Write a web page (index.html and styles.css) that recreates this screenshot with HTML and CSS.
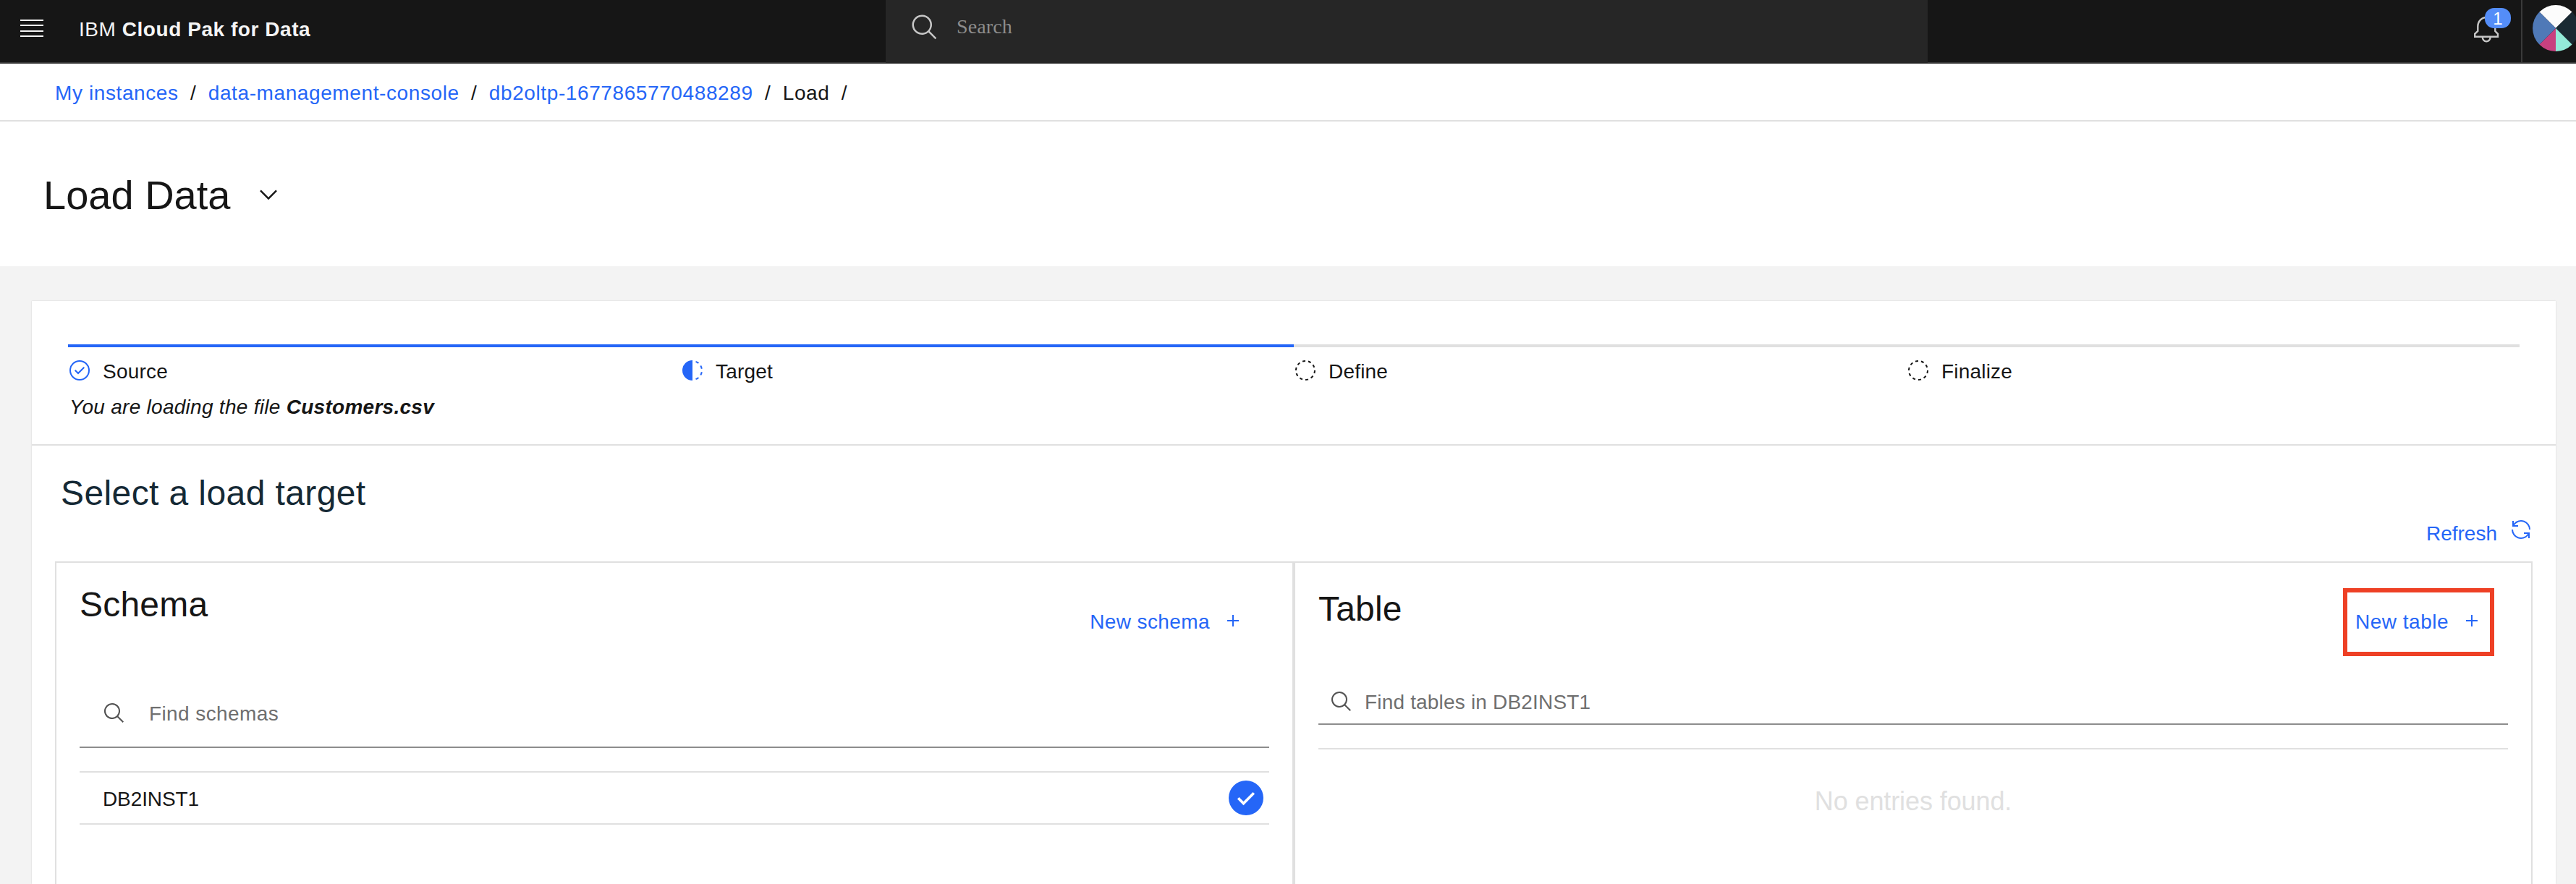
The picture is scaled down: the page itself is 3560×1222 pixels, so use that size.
FILE: index.html
```html
<!DOCTYPE html>
<html lang="en">
<head>
<meta charset="utf-8">
<title>Load Data</title>
<link rel="stylesheet" href="styles.css">
</head>
<body>
<svg class="sprite" aria-hidden="true">
  <symbol id="search" viewBox="0 0 32 32"><path d="M29 27.586l-7.552-7.552a11.018 11.018 0 1 0-1.414 1.414L27.586 29ZM4 13a9 9 0 1 1 9 9a9.01 9.01 0 0 1-9-9Z"/></symbol>
  <symbol id="add" viewBox="0 0 32 32"><path d="M17 15V8h-2v7H8v2h7v7h2v-7h7v-2z"/></symbol>
  <symbol id="circle-dash" viewBox="0 0 32 32"><path d="M7.7 4.7a14.7 14.7 0 00-3 3.1L6.3 9A13.26 13.26 0 018.9 6.3zM4.6 12.3l-1.9-.6A12.51 12.51 0 002 16H4A11.48 11.48 0 014.6 12.3zM2.7 20.4a14.4 14.4 0 002 3.9l1.6-1.2a12.89 12.89 0 01-1.7-3.3zM7.8 27.3a14.4 14.4 0 003.9 2l.6-1.9A12.89 12.89 0 019 25.7zM11.7 2.7l.6 1.9A11.48 11.48 0 0116 4V2A12.51 12.51 0 0011.7 2.7zM24.2 27.3a15.18 15.18 0 003.1-3.1L25.7 23A11.53 11.53 0 0123 25.7zM27.4 19.7l1.9.6A15.47 15.47 0 0030 16H28A11.48 11.48 0 0127.4 19.7zM29.2 11.6a14.4 14.4 0 00-2-3.9L25.6 8.9a12.89 12.89 0 011.7 3.3zM24.1 4.6a14.4 14.4 0 00-3.9-2l-.6 1.9a12.89 12.89 0 013.3 1.7zM20.3 29.3l-.6-1.9A11.48 11.48 0 0116 28v2A21.42 21.42 0 0020.3 29.3z"/></symbol>
</svg>

<header class="topbar">
  <div class="menu"><span></span><span></span><span></span><span></span></div>
  <div class="brand">IBM <b>Cloud Pak for Data</b></div>
  <div class="global-search">
    <svg class="global-search-icon"><use href="#search"/></svg>
    <span>Search</span>
  </div>
  <div class="notifications">
    <svg class="bell" viewBox="0 0 40 40"><path d="M4.2 30.8V26.8L8.3 23V16.5a12 12.5 0 0 1 24 0V23l3.7 3.8v4ZM14.8 31v.8a5.4 5.4 0 0 0 10.8 0V31"/></svg>
    <span class="badge">1</span>
  </div>
  <div class="profile">
    <svg class="avatar" viewBox="-32 -32 64 64">
      <path fill="#fcfcfc" d="M0 0L-22.6-22.6A32 32 0 0 1 22.6-22.6Z"/>
      <path fill="#1a2a33" d="M0 0L22.6-22.6A32 32 0 0 1 22.6 22.6Z"/>
      <path fill="#93ebd9" d="M0 0L22.6 22.6A32 32 0 0 1 0 32Z"/>
      <path fill="#c8407f" d="M0 0V32A32 32 0 0 1-22.6 22.6Z"/>
      <path fill="#4f79b7" d="M0 0L-22.6 22.6A32 32 0 0 1-22.6-22.6Z"/>
    </svg>
  </div>
</header>

<nav class="breadcrumb">
  <a>My instances</a><i>/</i><a>data-management-console</a><i>/</i><a>db2oltp-1677865770488289</a><i>/</i><span>Load</span><i>/</i>
</nav>

<div class="page-title">
  <h1>Load Data</h1>
  <svg class="chevron" viewBox="0 0 32 32"><path d="M16 22L6 12l1.4-1.4 8.6 8.6 8.6-8.6L26 12z"/></svg>
</div>

<main class="workspace">
  <section class="card">
    <div class="progress">
      <ol class="steps">
        <li class="step done">
          <svg class="icon" viewBox="0 0 32 32"><path d="M14 21.414L9 16.413 10.413 15 14 18.586 21.585 11 23 12.415z"/><path d="M16 2a14 14 0 1 0 14 14A14 14 0 0 0 16 2Zm0 26a12 12 0 1 1 12-12A12 12 0 0 1 16 28Z"/></svg>
          <span>Source</span>
        </li>
        <li class="step done">
          <svg class="icon" viewBox="0 0 32 32"><path d="M23.764 6.859l1.285-1.531A13.976 13.976 0 0020.867 2.887l-.683 1.878A11.973 11.973 0 0123.764 6.859zM27.81 14l1.968-.413A13.889 13.889 0 0028.14 9.046L26.409 10A12.52 12.52 0 0127.81 14zM20.184 27.235l.683 1.878a13.976 13.976 0 004.182-2.441l-1.285-1.531A11.973 11.973 0 0120.184 27.235zM26.409 22L28.14 23a14.14 14.14 0 001.638-4.587L27.81 18.066A12.152 12.152 0 0126.409 22zM16 30V2a14 14 0 000 28z"/></svg>
          <span>Target</span>
        </li>
        <li class="step">
          <svg class="icon"><use href="#circle-dash"/></svg>
          <span>Define</span>
        </li>
        <li class="step">
          <svg class="icon"><use href="#circle-dash"/></svg>
          <span>Finalize</span>
        </li>
      </ol>
      <p class="file-note">You are loading the file <b>Customers.csv</b></p>
    </div>

    <h2 class="section-title">Select a load target</h2>
    <div class="refresh">
      <span>Refresh</span>
      <svg class="icon" viewBox="0 0 32 32"><path d="M12 10H6.78A11 11 0 0 1 27 16h2A13 13 0 0 0 6 7.68V4H4v8h8ZM20 22h5.22A11 11 0 0 1 5 16H3a13 13 0 0 0 23 8.32V28h2V20H20Z"/></svg>
    </div>

    <div class="panels">
      <section class="panel">
        <div class="panel-head">
          <h3>Schema</h3>
          <div class="action new-schema"><span>New schema</span><svg class="icon"><use href="#add"/></svg></div>
        </div>
        <div class="field field-tall">
          <svg class="icon"><use href="#search"/></svg>
          <span>Find schemas</span>
        </div>
        <div class="list">
          <div class="row">
            <span>DB2INST1</span>
            <svg class="selected" viewBox="0 0 48 48"><circle cx="24" cy="24" r="24"/><path d="M13.2 24.3l7.3 7.3L34.8 17.3"/></svg>
          </div>
        </div>
      </section>
      <section class="panel panel-table">
        <div class="panel-head">
          <h3>Table</h3>
          <div class="action new-table"><span>New table</span><svg class="icon"><use href="#add"/></svg></div>
        </div>
        <div class="field">
          <svg class="icon"><use href="#search"/></svg>
          <span>Find tables in DB2INST1</span>
        </div>
        <div class="list">
          <p class="empty">No entries found.</p>
        </div>
      </section>
    </div>
  </section>
</main>
</body>
</html>
```

FILE: styles.css
```css
* { box-sizing: border-box; }
html, body { height: 100%; }
body {
  margin: 0;
  display: flex;
  flex-direction: column;
  overflow: hidden;
  background: #fff;
  color: #161616;
  font: 28px/35px "Liberation Sans", Arial, sans-serif;
  letter-spacing: 0.4px;
  white-space: nowrap;
}
h1, h2, h3, p, ol { margin: 0; padding: 0; font-weight: 400; }
svg { display: block; flex: none; fill: currentColor; }
.sprite { display: none; }
.icon { width: 32px; height: 32px; }

/* Top bar */
.topbar {
  flex: none;
  display: flex;
  height: 88px;
  background: #161616;
  color: #f4f4f4;
  border-bottom: 2px solid #393939;
}
.menu {
  width: 60px;
  height: 51px;
  padding: 27px 0 0 28px;
  display: flex;
  flex-direction: column;
  justify-content: space-between;
}
.menu span { height: 2px; background: #f4f4f4; }
.brand { width: 1164px; padding-left: 49px; line-height: 81px; letter-spacing: 0.55px; }
.global-search {
  width: 1440px;
  height: 87px;
  display: flex;
  padding-left: 34px;
  background: #262626;
  color: #8d8d8d;
  font-family: "Liberation Serif", "Times New Roman", serif;
  letter-spacing: 0.1px;
}
.global-search-icon { width: 40px; height: 40px; margin: 18px 24px 0 0; color: #c6c6c6; }
.global-search span { line-height: 74px; }
.notifications {
  position: relative;
  width: 820px;
  display: flex;
  justify-content: flex-end;
  padding: 20px 28px 0 0;
  color: #c6c6c6;
}
.bell { width: 40px; height: 40px; }
.bell path { fill: none; stroke: currentColor; stroke-width: 2.4; }
.badge {
  position: absolute;
  right: 14px;
  top: 11px;
  width: 36px;
  height: 28px;
  border-radius: 13px;
  background: #548df8;
  color: #fff;
  font-size: 24px;
  line-height: 29px;
  text-align: center;
  letter-spacing: 0;
}
.profile { flex: 1; overflow: hidden; border-left: 2px solid #393939; padding: 7px 0 0 14px; }
.avatar { width: 64px; height: 64px; }

/* Breadcrumb and title */
.breadcrumb {
  flex: none;
  display: flex;
  height: 80px;
  padding: 3px 0 0 76px;
  line-height: 75px;
  letter-spacing: 0.6px;
  border-bottom: 2px solid #e0e0e0;
}
.breadcrumb a { color: #2566f7; }
.breadcrumb i { font-style: normal; margin: 0 16.4px; }
.page-title { flex: none; display: flex; height: 200px; padding: 65px 0 0 60px; }
.page-title h1 { width: 292px; font-size: 56px; line-height: 73px; letter-spacing: 0; }
.chevron { width: 38px; height: 38px; margin-top: 17px; }

/* Card */
.workspace { flex: 1; display: flex; min-height: 0; padding: 48px 28px 0 44px; background: #f3f3f3; }
.card { flex: 1; display: flex; flex-direction: column; background: #fff; box-shadow: 0 0 2px rgba(0, 0, 0, 0.14); }
.progress { flex: none; height: 200px; padding: 60px 50px 0; border-bottom: 2px solid #e0e0e0; }
.steps { display: grid; grid-template-columns: repeat(4, 1fr); list-style: none; }
.step { display: flex; gap: 16px; padding-top: 16px; border-top: 4px solid #e0e0e0; letter-spacing: 0.2px; }
.step.done { border-color: #2566f7; }
.step.done .icon { color: #2566f7; }
.file-note { margin-top: 14px; padding-left: 2px; font-style: italic; letter-spacing: 0.28px; }
.section-title { padding: 37px 0 0 40px; font-size: 48px; line-height: 57px; color: #152935; }
.refresh {
  height: 66px;
  display: flex;
  justify-content: flex-end;
  gap: 17px;
  padding: 6px 32px 0 0;
  color: #2566f7;
  letter-spacing: 0;
}
.refresh span { margin-top: 4px; }

/* Schema and table panels */
.panels { flex: 1; display: grid; grid-template-columns: 1fr 1fr; margin: 0 32px; }
.panel { border: 2px solid #e0e0e0; border-bottom: 0; padding: 0 32px; }
.panel-head { display: flex; justify-content: space-between; height: 158px; padding: 29px 34px 0 0; }
.panel-table .panel-head { height: 142px; padding-top: 35px; }
.panel-head h3 { font-size: 48px; line-height: 57px; letter-spacing: 0.2px; }
.action { position: relative; height: 35px; display: flex; gap: 16px; color: #2566f7; }
.new-schema { margin-top: 35px; }
.new-table { margin-top: 29px; letter-spacing: 0.5px; }
.new-table::after {
  content: "";
  position: absolute;
  inset: -29px -15px -30px -17px;
  border: 6px solid #ee4025;
}
.field {
  display: flex;
  gap: 16px;
  height: 82px;
  padding: 34px 0 0 16px;
  border-bottom: 2px solid #8d8d8d;
  color: #6f6f6f;
  letter-spacing: 0.18px;
}
.field .icon { color: #525252; }
.field span { margin-top: -1px; }
.field-tall { height: 98px; gap: 32px; padding-left: 32px; letter-spacing: 0.4px; }
.list { margin-top: 32px; border-top: 2px solid #e0e0e0; }
.row {
  display: flex;
  justify-content: space-between;
  height: 72px;
  padding: 11px 8px 0 32px;
  border-bottom: 2px solid #e0e0e0;
  letter-spacing: -0.1px;
}
.row span { margin-top: 8px; }
.selected { width: 48px; height: 48px; color: #2566f7; }
.selected path { fill: none; stroke: #fff; stroke-width: 3.6; }
.empty { padding-top: 51px; font-size: 36px; line-height: 41px; letter-spacing: -0.1px; text-align: center; color: #e0e0e0; }
```
